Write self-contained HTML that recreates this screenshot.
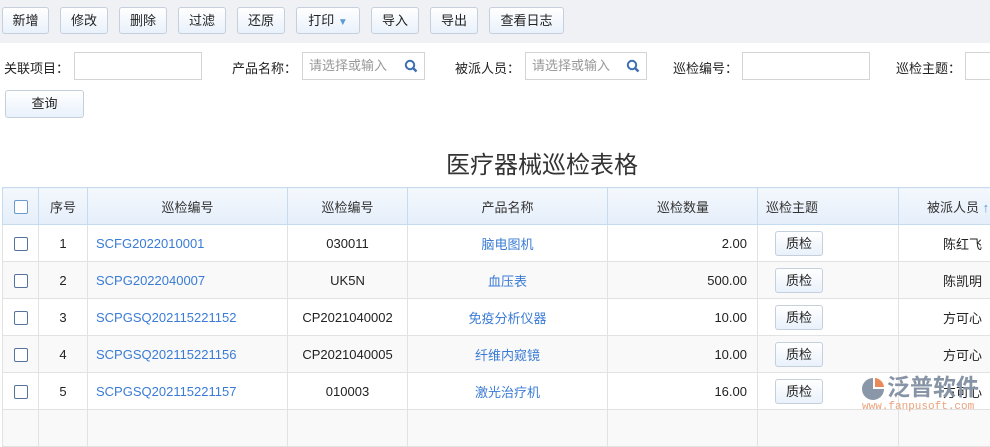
<!DOCTYPE html>
<html><head><meta charset="utf-8"><style>
*{box-sizing:border-box;margin:0;padding:0}
body{width:990px;height:417px;overflow:hidden;background:#fff;font-family:"Liberation Sans","Noto Sans CJK SC",sans-serif;font-size:13px;color:#222;position:relative}
.tb{position:absolute;left:0;top:0;width:990px;height:43px;background:#f0f1f4}
.btn{position:absolute;height:27px;border:1px solid #c6cfdc;border-radius:3px;background:linear-gradient(#fff,#e9f1fb);text-align:center;line-height:25px;font-size:13px;color:#222}
.lbl{position:absolute;top:58px;font-size:13px}
.inp{position:absolute;top:52px;height:28px;border:1px solid #d4d4d4;background:#fff;color:#999;font-size:13px;line-height:26px;padding-left:6px}
.title{position:absolute;left:0;width:1084px;top:145px;text-align:center;font-size:24px;color:#333}
table{position:absolute;left:2px;top:187px;border-collapse:collapse;table-layout:fixed;width:1010px}
td,th{border:1px solid #e2e2e2;height:37px;font-weight:normal;font-size:13px;white-space:nowrap;overflow:hidden}
th{background:linear-gradient(#f4f8fd,#e5eefa);border-color:#c5dbef;color:#333}
tr:nth-child(odd) td{background:#f9f9f9}
.cb{display:inline-block;width:14px;height:14px;border:1px solid #55739b;border-radius:2px;background:#fff;vertical-align:middle}
th .cb{border-color:#6a9bcb}
.c{text-align:center}.r{text-align:right;padding-right:10px}
.lk{color:#3a7bd5;padding-left:8px}
.q{display:inline-block;width:48px;height:25px;border:1px solid #c6cfdc;border-radius:3px;background:linear-gradient(#fff,#e9f1fb);line-height:23px;text-align:center}
</style></head><body>
<div class="tb">
<div class="btn" style="left:2px;top:7px;width:47px">新增</div>
<div class="btn" style="left:60px;top:7px;width:48px">修改</div>
<div class="btn" style="left:119px;top:7px;width:48px">删除</div>
<div class="btn" style="left:178px;top:7px;width:48px">过滤</div>
<div class="btn" style="left:237px;top:7px;width:48px">还原</div>
<div class="btn" style="left:296px;top:7px;width:64px">打印 <span style="color:#5b9bd5;font-size:10px">▼</span></div>
<div class="btn" style="left:371px;top:7px;width:48px">导入</div>
<div class="btn" style="left:430px;top:7px;width:48px">导出</div>
<div class="btn" style="left:489px;top:7px;width:75px">查看日志</div>
</div>
<div class="lbl" style="left:4px">关联项目：</div><div class="inp" style="left:74px;width:128px"></div>
<div class="lbl" style="left:232px">产品名称：</div><div class="inp" style="left:302px;width:123px">请选择或输入<svg style="position:absolute;right:6px;top:6px" width="14" height="14" viewBox="0 0 14 14"><circle cx="6" cy="6" r="4.2" fill="none" stroke="#3d6fb0" stroke-width="2"/><path d="M9 9l3.5 3.5" stroke="#3d6fb0" stroke-width="2.4"/></svg></div>
<div class="lbl" style="left:455px">被派人员：</div><div class="inp" style="left:525px;width:122px">请选择或输入<svg style="position:absolute;right:6px;top:6px" width="14" height="14" viewBox="0 0 14 14"><circle cx="6" cy="6" r="4.2" fill="none" stroke="#3d6fb0" stroke-width="2"/><path d="M9 9l3.5 3.5" stroke="#3d6fb0" stroke-width="2.4"/></svg></div>
<div class="lbl" style="left:673px">巡检编号：</div><div class="inp" style="left:742px;width:128px"></div>
<div class="lbl" style="left:896px">巡检主题：</div><div class="inp" style="left:965px;width:60px"></div>
<div class="btn" style="left:5px;top:90px;width:79px;height:28px;line-height:26px">查询</div>
<div class="title">医疗器械巡检表格</div>
<table>
<colgroup><col style="width:36px"><col style="width:49px"><col style="width:200px"><col style="width:120px"><col style="width:200px"><col style="width:150px"><col style="width:141px"><col style="width:114px"></colgroup>
<tr><th class="c"><span class="cb"></span></th><th class="c">序号</th><th class="c">巡检编号</th><th class="c">巡检编号</th><th class="c">产品名称</th><th class="r" style="padding-right:48px">巡检数量</th><th style="text-align:left;padding-left:8px">巡检主题</th><th style="text-align:left;padding-left:28px">被派人员 <span style="color:#5b9bd5">↑</span></th></tr>
<tr><td class="c"><span class="cb"></span></td><td class="c">1</td><td class="lk">SCFG2022010001</td><td class="c">030011</td><td class="c" style="color:#3a7bd5">脑电图机</td><td class="r">2.00</td><td style="padding-left:17px"><span class="q">质检</span></td><td style="padding-left:44px">陈红飞</td></tr>
<tr><td class="c"><span class="cb"></span></td><td class="c">2</td><td class="lk">SCPG2022040007</td><td class="c">UK5N</td><td class="c" style="color:#3a7bd5">血压表</td><td class="r">500.00</td><td style="padding-left:17px"><span class="q">质检</span></td><td style="padding-left:44px">陈凯明</td></tr>
<tr><td class="c"><span class="cb"></span></td><td class="c">3</td><td class="lk">SCPGSQ202115221152</td><td class="c">CP2021040002</td><td class="c" style="color:#3a7bd5">免疫分析仪器</td><td class="r">10.00</td><td style="padding-left:17px"><span class="q">质检</span></td><td style="padding-left:44px">方可心</td></tr>
<tr><td class="c"><span class="cb"></span></td><td class="c">4</td><td class="lk">SCPGSQ202115221156</td><td class="c">CP2021040005</td><td class="c" style="color:#3a7bd5">纤维内窥镜</td><td class="r">10.00</td><td style="padding-left:17px"><span class="q">质检</span></td><td style="padding-left:44px">方可心</td></tr>
<tr><td class="c"><span class="cb"></span></td><td class="c">5</td><td class="lk">SCPGSQ202115221157</td><td class="c">010003</td><td class="c" style="color:#3a7bd5">激光治疗机</td><td class="r">16.00</td><td style="padding-left:17px"><span class="q">质检</span></td><td style="padding-left:44px">方可心</td></tr>
<tr><td></td><td></td><td></td><td></td><td></td><td></td><td></td><td></td></tr>
</table>
<div style="position:absolute;left:860px;top:372px;width:130px;height:45px;white-space:nowrap">
<svg style="position:absolute;left:0;top:4px" width="26" height="26" viewBox="0 0 26 26"><path d="M13 2 A11 11 0 1 0 24 13 L13 13Z" fill="#8a97a8"/><path d="M15 2 A10 10 0 0 1 24 11 L15 11Z" fill="#e98a5a"/></svg>
<div style="position:absolute;left:27px;top:2px;font-size:23px;line-height:26px;color:#8794a6;font-weight:bold;white-space:nowrap">泛普软件</div>
<div style="position:absolute;left:2px;top:29px;font-size:11px;color:#e9a27c;font-family:'Liberation Mono',monospace;white-space:nowrap">www.fanpusoft.com</div>
</div>
</body></html>
